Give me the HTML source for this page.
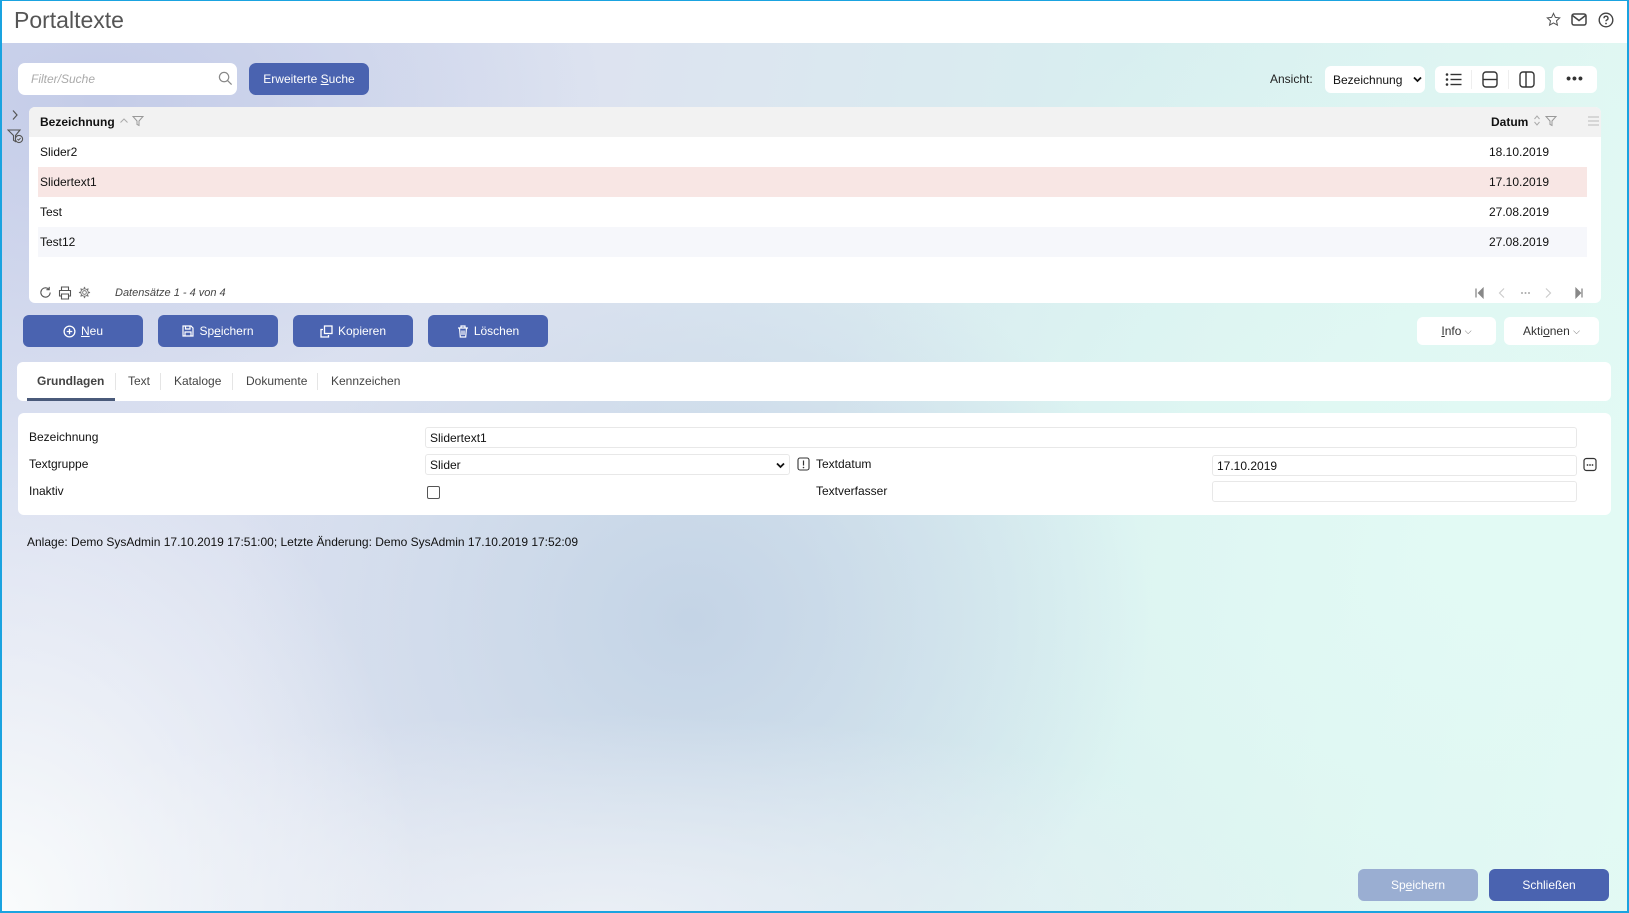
<!DOCTYPE html>
<html><head><meta charset="utf-8"><style>
*{box-sizing:border-box;margin:0;padding:0}
body{width:1629px;height:913px;overflow:hidden;font-family:"Liberation Sans",sans-serif;font-size:12px;color:#111;position:relative;
background:
radial-gradient(ellipse 420px 520px at 0px 913px,rgba(250,252,252,1),rgba(250,252,252,0) 100%),
radial-gradient(ellipse 700px 200px at 600px 913px,rgba(236,240,246,.9),rgba(236,240,246,0) 100%),
radial-gradient(ellipse 460px 400px at 690px 620px,rgba(196,212,230,1),rgba(196,212,230,0) 100%),
radial-gradient(ellipse 700px 600px at 1500px 550px,rgba(226,250,244,1),rgba(226,250,244,0) 100%),
radial-gradient(ellipse 500px 300px at 100px 100px,rgba(196,204,232,1),rgba(196,204,232,0) 100%),
linear-gradient(100deg,#d6dcef 0%,#dde3f0 35%,#d8eff0 65%,#e2f9f3 100%);}
.frame{position:absolute;inset:0;border:2px solid #1aa3e0;border-top-width:1px;pointer-events:none;z-index:10}
.hdr{position:absolute;left:0;top:0;width:1629px;height:43px;background:#fff}
.title{position:absolute;left:14px;top:7px;font-size:23px;color:#555}
.abs{position:absolute}
.btn{position:absolute;background:#4a63b0;color:#fff;border-radius:6px;display:flex;align-items:center;justify-content:center;font-size:12px}
.btn svg{margin-right:5px}
.wbtn{position:absolute;background:#fff;border-radius:6px;display:flex;align-items:center;justify-content:center;font-size:12px;color:#333}
.panel{position:absolute;background:#fff;border-radius:6px}
.row{position:absolute;left:38px;width:1549px;height:30px}
.cell{position:absolute;top:8px}
.inp{position:absolute;border:1px solid #e8e8e8;border-radius:3px;background:#fff;font-size:12px;padding:3px 4px}
svg{display:block}
</style></head><body>
<div class="hdr"><div class="title">Portaltexte</div>
<svg class="abs" style="left:1546px;top:12px" width="15" height="15" viewBox="0 0 16 16"><path d="M8 1.5l2 4.3 4.6.5-3.4 3.1 1 4.6L8 11.7 3.8 14l1-4.6L1.4 6.3l4.6-.5z" fill="none" stroke="#555" stroke-width="1.1"/></svg>
<svg class="abs" style="left:1571px;top:13px" width="16" height="13" viewBox="0 0 16 13"><rect x="1" y="1" width="14" height="11" rx="2" fill="none" stroke="#444" stroke-width="1.5"/><path d="M1.5 2.5l6.5 5 6.5-5" fill="none" stroke="#444" stroke-width="1.5"/></svg>
<svg class="abs" style="left:1598px;top:12px" width="16" height="16" viewBox="0 0 16 16"><circle cx="8" cy="8" r="6.8" fill="none" stroke="#444" stroke-width="1.4"/><path d="M6 6.2a2 2 0 1 1 2.6 1.9c-.5.2-.6.6-.6 1.2" fill="none" stroke="#444" stroke-width="1.4"/><circle cx="8" cy="11.5" r=".9" fill="#444"/></svg>
</div>

<div class="panel" style="left:18px;top:63px;width:219px;height:32px;border-radius:7px"><span class="abs" style="left:13px;top:9px;color:#aaa;font-style:italic">Filter/Suche</span>
<svg class="abs" style="left:200px;top:8px" width="15" height="15" viewBox="0 0 16 16"><circle cx="6.5" cy="6.5" r="5" fill="none" stroke="#888" stroke-width="1.3"/><path d="M10.2 10.2l4.3 4.3" stroke="#888" stroke-width="1.3"/></svg></div>
<div class="btn" style="left:249px;top:63px;width:120px;height:32px;border-radius:7px"><span>Erweiterte <u>S</u>uche</span></div>

<span class="abs" style="left:1270px;top:72px;color:#222">Ansicht:</span>
<div class="wbtn" style="left:1325px;top:66px;width:100px;height:27px;justify-content:flex-start;padding-left:8px;color:#111">Bezeichnung
<svg class="abs" style="left:88px;top:10px" width="9" height="7" viewBox="0 0 9 7"><path d="M1 1.5l3.5 3.5 3.5-3.5" fill="none" stroke="#111" stroke-width="1.8"/></svg></div>
<div class="wbtn" style="left:1435px;top:66px;width:110px;height:27px"></div>
<svg class="abs" style="left:1445px;top:72px" width="18" height="15" viewBox="0 0 18 15"><g fill="#333"><circle cx="2" cy="2.5" r="1.3"/><circle cx="2" cy="7.5" r="1.3"/><circle cx="2" cy="12.5" r="1.3"/><rect x="5.5" y="1.8" width="11" height="1.4"/><rect x="5.5" y="6.8" width="11" height="1.4"/><rect x="5.5" y="11.8" width="11" height="1.4"/></g></svg>
<div class="abs" style="left:1471px;top:70px;width:1px;height:19px;background:#eee"></div>
<svg class="abs" style="left:1482px;top:71px" width="16" height="17" viewBox="0 0 16 17"><rect x="1" y="1" width="14" height="15" rx="3" fill="none" stroke="#333" stroke-width="1.4"/><path d="M1 8.5h14" stroke="#333" stroke-width="1.4"/></svg>
<div class="abs" style="left:1508px;top:70px;width:1px;height:19px;background:#eee"></div>
<svg class="abs" style="left:1519px;top:71px" width="16" height="17" viewBox="0 0 16 17"><rect x="1" y="1" width="14" height="15" rx="3" fill="none" stroke="#333" stroke-width="1.4"/><path d="M7 1v15" stroke="#333" stroke-width="1.4"/></svg>
<div class="wbtn" style="left:1553px;top:66px;width:44px;height:27px;font-weight:bold;font-size:14px;letter-spacing:1px;padding-bottom:3px">•••</div>

<svg class="abs" style="left:11px;top:109px" width="8" height="12" viewBox="0 0 8 12"><path d="M2 1.5l4 4.5-4 4.5" fill="none" stroke="#555" stroke-width="1.2"/></svg>
<svg class="abs" style="left:7px;top:129px" width="17" height="15" viewBox="0 0 17 15"><path d="M1 1h12l-4.5 5.5v6l-2-1.2V6.5z" fill="none" stroke="#555" stroke-width="1.1"/><circle cx="12" cy="10" r="3.6" fill="#d0d6ea" stroke="#555" stroke-width="1.1"/><path d="M10.4 10l1.2 1.2 2-2.2" fill="none" stroke="#555" stroke-width="1"/></svg>

<div class="panel" style="left:29px;top:107px;width:1572px;height:196px;overflow:hidden">
<div class="abs" style="left:0;top:0;width:1572px;height:30px;background:#f2f2f2"></div>
<b class="abs" style="left:11px;top:8px">Bezeichnung</b>
<svg class="abs" style="left:90px;top:10px" width="10" height="7" viewBox="0 0 10 7"><path d="M1.5 5.5l3.5-3.5 3.5 3.5" fill="none" stroke="#aaa" stroke-width="1"/></svg>
<svg class="abs" style="left:103px;top:8px" width="12" height="12" viewBox="0 0 12 12"><path d="M1 1.5h10l-4 4.5v4.5l-2-1V6z" fill="none" stroke="#999" stroke-width="1"/></svg>
<b class="abs" style="left:1462px;top:8px">Datum</b>
<svg class="abs" style="left:1504px;top:7px" width="8" height="13" viewBox="0 0 8 13"><path d="M1.5 5l2.5-3 2.5 3M1.5 8l2.5 3 2.5-3" fill="none" stroke="#aaa" stroke-width="1"/></svg>
<svg class="abs" style="left:1516px;top:8px" width="12" height="12" viewBox="0 0 12 12"><path d="M1 1.5h10l-4 4.5v4.5l-2-1V6z" fill="none" stroke="#999" stroke-width="1"/></svg>
<svg class="abs" style="left:1559px;top:9px" width="11" height="10" viewBox="0 0 11 10"><path d="M0 1h11M0 5h11M0 9h11" stroke="#bbb" stroke-width="1"/></svg>
<svg class="abs" style="left:10px;top:179px" width="13" height="13" viewBox="0 0 14 14"><path d="M12 7a5 5 0 1 1-1.5-3.6M11 1v3h-3" fill="none" stroke="#555" stroke-width="1.2"/></svg>
<svg class="abs" style="left:29px;top:179px" width="14" height="14" viewBox="0 0 14 14"><path d="M3.5 4V1h7v3M3.5 10H1.5V4.5h11V10h-2M3.5 8h7v5h-7z" fill="none" stroke="#555" stroke-width="1.1"/></svg>
<svg class="abs" style="left:49px;top:179px" width="13" height="13" viewBox="0 0 14 14"><circle cx="7" cy="7" r="2" fill="none" stroke="#777" stroke-width="1"/><path d="M7 1v2M7 11v2M1 7h2M11 7h2M2.8 2.8l1.4 1.4M9.8 9.8l1.4 1.4M2.8 11.2l1.4-1.4M9.8 4.2l1.4-1.4" stroke="#777" stroke-width="1.4"/><circle cx="7" cy="7" r="4" fill="none" stroke="#777" stroke-width="1"/></svg>
<i class="abs" style="left:86px;top:180px;font-size:11px;color:#444">Datensätze 1 - 4 von 4</i>
<svg class="abs" style="left:1446px;top:180px" width="120" height="12" viewBox="0 0 120 12"><path d="M1 1.5v9M8 1.5L3.5 6 8 10.5z" stroke="#888" fill="#888" stroke-width="1.3"/><path d="M29 1.5L24.5 6 29 10.5" fill="none" stroke="#ccc" stroke-width="1.2"/><g fill="#aaa"><circle cx="47" cy="6" r="1"/><circle cx="50.5" cy="6" r="1"/><circle cx="54" cy="6" r="1"/></g><path d="M71 1.5L75.5 6 71 10.5" fill="none" stroke="#ccc" stroke-width="1.2"/><path d="M101 1.5v9L105.5 6zM107 1.5v9" stroke="#888" fill="#888" stroke-width="1.3"/></svg>
</div>
<div class="row" style="top:137px;background:#fff"><span class="cell" style="left:2px">Slider2</span><span class="cell" style="left:1451px">18.10.2019</span></div>
<div class="row" style="top:167px;background:#f8e6e4"><span class="cell" style="left:2px">Slidertext1</span><span class="cell" style="left:1451px">17.10.2019</span></div>
<div class="row" style="top:197px;background:#fff"><span class="cell" style="left:2px">Test</span><span class="cell" style="left:1451px">27.08.2019</span></div>
<div class="row" style="top:227px;background:#f6f7fb"><span class="cell" style="left:2px">Test12</span><span class="cell" style="left:1451px">27.08.2019</span></div>

<div class="btn" style="left:23px;top:315px;width:120px;height:32px"><svg width="13" height="13" viewBox="0 0 14 14"><circle cx="7" cy="7" r="5.8" fill="none" stroke="#fff" stroke-width="1.4"/><path d="M7 4v6M4 7h6" stroke="#fff" stroke-width="1.4"/></svg><span><u>N</u>eu</span></div>
<div class="btn" style="left:158px;top:315px;width:120px;height:32px"><svg width="12" height="12" viewBox="0 0 12 12"><path d="M1 1h8l2 2v8H1zM3.5 1v3h4.5V1M3 11V7h6v4" fill="none" stroke="#fff" stroke-width="1.2"/></svg><span>Sp<u>e</u>ichern</span></div>
<div class="btn" style="left:293px;top:315px;width:120px;height:32px"><svg width="13" height="13" viewBox="0 0 13 13"><rect x="4.5" y="1" width="7.5" height="7.5" fill="none" stroke="#fff" stroke-width="1.3"/><path d="M3 4.5H1V12h7.5v-2" fill="none" stroke="#fff" stroke-width="1.3"/></svg><span>Kopieren</span></div>
<div class="btn" style="left:428px;top:315px;width:120px;height:32px"><svg width="12" height="13" viewBox="0 0 12 13"><path d="M1 3h10M4 3V1h4v2M2.5 3l.8 9h5.4l.8-9M5 5.5v4.5M7 5.5v4.5" fill="none" stroke="#fff" stroke-width="1.2"/></svg><span>Löschen</span></div>
<div class="wbtn" style="left:1417px;top:317px;width:79px;height:28px"><span><u>I</u>nfo</span>&nbsp;<span style="font-size:9px;color:#666">⌵</span></div>
<div class="wbtn" style="left:1504px;top:317px;width:95px;height:28px"><span>Akti<u>o</u>nen</span>&nbsp;<span style="font-size:9px;color:#666">⌵</span></div>

<div class="panel" style="left:17px;top:362px;width:1594px;height:39px">
<b class="abs" style="left:20px;top:12px;color:#444">Grundlagen</b>
<div class="abs" style="left:10px;top:36px;width:88px;height:3px;background:#4a5a7a"></div>
<div class="abs" style="left:98px;top:11px;width:1px;height:17px;background:#e5e5e5"></div>
<span class="abs" style="left:111px;top:12px;color:#444">Text</span>
<div class="abs" style="left:143px;top:11px;width:1px;height:17px;background:#e5e5e5"></div>
<span class="abs" style="left:157px;top:12px;color:#444">Kataloge</span>
<div class="abs" style="left:215px;top:11px;width:1px;height:17px;background:#e5e5e5"></div>
<span class="abs" style="left:229px;top:12px;color:#444">Dokumente</span>
<div class="abs" style="left:300px;top:11px;width:1px;height:17px;background:#e5e5e5"></div>
<span class="abs" style="left:314px;top:12px;color:#444">Kennzeichen</span>
</div>

<div class="panel" style="left:18px;top:413px;width:1593px;height:102px"></div>
<span class="abs" style="left:29px;top:430px">Bezeichnung</span>
<span class="abs" style="left:29px;top:457px">Textgruppe</span>
<span class="abs" style="left:29px;top:484px">Inaktiv</span>
<div class="inp" style="left:425px;top:427px;width:1152px;height:21px">Slidertext1</div>
<div class="inp" style="left:425px;top:454px;width:365px;height:21px">Slider
<svg class="abs" style="left:350px;top:7px" width="9" height="7" viewBox="0 0 9 7"><path d="M1 1.5l3.5 3.5 3.5-3.5" fill="none" stroke="#111" stroke-width="1.8"/></svg></div>
<div class="abs" style="left:427px;top:486px;width:13px;height:13px;border:1px solid #555;border-radius:2px;background:#fff"></div>
<svg class="abs" style="left:797px;top:457px" width="13" height="14" viewBox="0 0 13 14"><rect x="1" y="1" width="11" height="12" rx="2" fill="none" stroke="#333" stroke-width="1.1"/><path d="M6.5 3.5v5" stroke="#333" stroke-width="1.2"/><circle cx="6.5" cy="10.5" r=".8" fill="#333"/></svg>
<span class="abs" style="left:816px;top:457px">Textdatum</span>
<span class="abs" style="left:816px;top:484px">Textverfasser</span>
<div class="inp" style="left:1212px;top:455px;width:365px;height:21px">17.10.2019</div>
<div class="inp" style="left:1212px;top:481px;width:365px;height:21px"></div>
<svg class="abs" style="left:1583px;top:457px" width="14" height="15" viewBox="0 0 14 15"><rect x="1" y="1.5" width="12" height="12" rx="2.5" fill="none" stroke="#333" stroke-width="1.2"/><g fill="#333"><circle cx="4.5" cy="8" r=".9"/><circle cx="7" cy="8" r=".9"/><circle cx="9.5" cy="8" r=".9"/></g></svg>

<span class="abs" style="left:27px;top:535px">Anlage: Demo SysAdmin 17.10.2019 17:51:00; Letzte Änderung: Demo SysAdmin 17.10.2019 17:52:09</span>

<div class="btn" style="left:1358px;top:869px;width:120px;height:32px;background:#9aaed2"><span>Sp<u>e</u>ichern</span></div>
<div class="btn" style="left:1489px;top:869px;width:120px;height:32px">Schließen</div>
<div class="frame"></div>
</body></html>
